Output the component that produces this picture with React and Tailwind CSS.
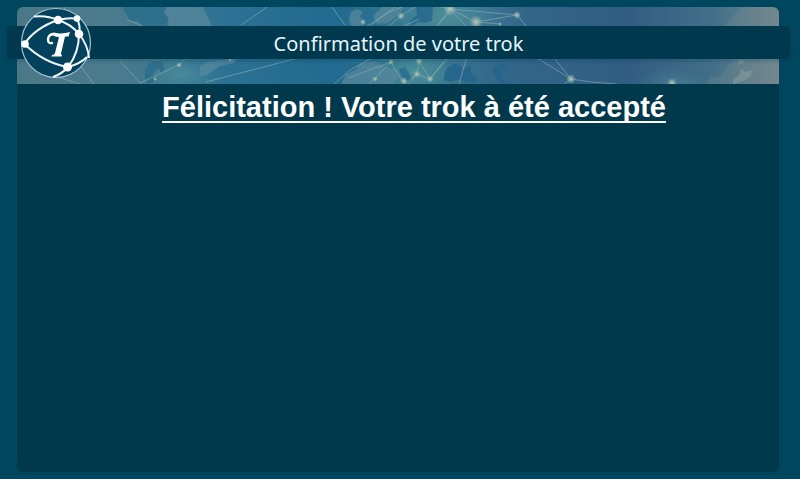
import React from "react";

const nodes = [
  [37, 69, 2], [138, 72, 2], [162, 58, 3], [213, 53, 2], [384, 9, 4], [433, 2, 7],
  [459, 15, 7], [483, 17, 2], [500, 8, 4], [358, 72, 3], [374, 55, 3], [402, 54, 4],
  [387, 74, 4], [400, 67, 4], [413, 72, 4], [554, 72, 5], [346, 15, 3], [655, 76, 5],
];

function WorldMap() {
  return (
    <svg className="block h-full w-full" viewBox="0 0 762 77" preserveAspectRatio="none" aria-hidden="true">
      <defs>
        <linearGradient id="sky" x1="0" x2="1" y1="0" y2="0">
          <stop offset="0" stopColor="#4b7887" />
          <stop offset=".14" stopColor="#4a7b8e" />
          <stop offset=".28" stopColor="#2b7194" />
          <stop offset=".42" stopColor="#226b90" />
          <stop offset=".54" stopColor="#3c7b90" />
          <stop offset=".64" stopColor="#32668b" />
          <stop offset=".8" stopColor="#315d83" />
          <stop offset=".91" stopColor="#416f88" />
          <stop offset="1" stopColor="#6e868f" />
        </linearGradient>
        <radialGradient id="glow">
          <stop offset="0" stopColor="#6fb5ac" stopOpacity=".75" />
          <stop offset="1" stopColor="#4d9b9e" stopOpacity="0" />
        </radialGradient>
        <radialGradient id="spark">
          <stop offset="0" stopColor="#c2c5b4" />
          <stop offset=".45" stopColor="#9cb5ac" stopOpacity=".7" />
          <stop offset="1" stopColor="#6fb5ac" stopOpacity="0" />
        </radialGradient>
      </defs>
      <rect width="762" height="77" fill="url(#sky)" />
      <ellipse cx="165" cy="68" rx="42" ry="20" fill="url(#glow)" opacity=".45" />
      <ellipse cx="436" cy="10" rx="80" ry="32" fill="url(#glow)" opacity=".5" />
      <ellipse cx="395" cy="66" rx="56" ry="28" fill="url(#glow)" opacity=".5" />
      <ellipse cx="655" cy="77" rx="36" ry="16" fill="url(#glow)" opacity=".35" />
      <g fill="#2b6e8c" opacity=".85">
        <path d="M109 0h42l-3 6 4 5-3 8h-24l-4-5-8-1-5-8-3-5z" />
        <path d="M128 61l8-7 9 1 2 6-7 1-4 5 1 8-6 2-3-7zM142 60l6 1-4 6z" />
      </g>
      <g fill="#5a899c" opacity=".7">
        <path d="M149 0h37l9 19h-43l-1-8-4-5zM183 59l7-4 24-3 7-2-4 6-14 3-13 9-7 1z" />
        <path d="M334 5l6-3 6 3-3 4 6 8-5 2h-9l-2-3-1-5zM356 9l9-9h22l-6 8-10 8-11 1z" />
        <path d="M329 67l9-4 6-7 13-2 11 6 10 1 4 8-6 8h-52z" />
      </g>
      <g fill="#26658c">
        <path d="M399 0h17l-1 14-6 2-8-1-6 4-2-5 7-6z" opacity=".8" />
        <path d="M427 68l4-8 6-3 6 1 3 5 7-5 1 8 5 4 1 4-4 2-8-1-6-3-8 3-7-2zM476 61l12-5 1 5-5 5 3 9 7 2h-11l-6-10z" />
        <path d="M382 62l6-2 4 6 3 6-4 4-6-6z" opacity=".7" />
      </g>
      <path d="M724 0h38v77H689l5-8 7 2 6-7 7-9 5-8-13-26z" fill="#8a9894" opacity=".2" />
      <path d="M722 53h5l-1 4h-5zM716 73l6-5 2-6 5 3 7-2-3 7-9 5-8 2z" fill="#839698" opacity=".7" />
      <path d="M110 13l16 6M50 0L24 19M57 50l20 27M103 54l20 22 39-18 9-9M37 69L63 77M189 75l92-24M224 18L250 0M315 0l13 18M317 77l16-14 22-12M350 19l22-14 13-5M331 71l43-16M352 77l22-22 13 22M352 20L378 0M384 9l-12 10M384 9l14-9M402 54l-2 13-13 10M402 54l11 18 14-18M421 18l12-16 26 13 24 2M433 2l67 6M459 15l41-7 9 11M433 2l16 17M420 19l15-17-12-2M402 12l-15 7M391 77l9-10 13 5M413 72l18-21M450 49l-8 28M520 51l34 21 20 3 26 2M537 51l17 21-7 5" fill="none" stroke="#8eafb4" strokeOpacity=".6" strokeWidth="1" />
      {nodes.map(([x, y, r]) => (
        <circle key={`${x}-${y}`} cx={x} cy={y} r={r} fill="url(#spark)" />
      ))}
    </svg>
  );
}

function Logo() {
  return (
    <svg className="block h-full w-full" viewBox="0 0 72 72" role="img" aria-label="Trok">
      <circle cx="36" cy="36" r="34.5" fill="#04415c" stroke="#a3c6d5" strokeWidth="1.2" />
      <g fill="none" stroke="#eef8fc" strokeWidth="2">
        <path d="M14 9.500Q27 8 38 13M38 13Q50 10 57 12M38 13Q15 21 4.500 37Q24 56 48 60Q60 57 67 50M38 13Q51 17 59 27Q68 38 69 51M57 12Q61 19 59 27Q59 46 48 60Q42 67 33 70" />
      </g>
      <g fill="#fff">
        <circle cx="38" cy="13" r="4.300" />
        <circle cx="57" cy="11.500" r="3.300" />
        <circle cx="59" cy="27" r="4.300" />
        <circle cx="5" cy="37" r="3.800" />
        <circle cx="47.500" cy="60" r="4.500" />
      </g>
      <path d="M34 27Q29 27 28 32Q28 37 32 36" fill="none" stroke="#fff" strokeWidth="2.400" strokeLinecap="round" />
      <path d="M34 25.500Q41 27.500 50 25L48.500 29.500Q46 29.500 45 29.500L41 46.500Q41 48 42 48L41.500 49.500H31.500L32 48Q34.500 48 35 46L39 30Q33 29.500 32 27Z" fill="#fff" />
    </svg>
  );
}

export default function App() {
  return (
    <div className="flex min-h-screen flex-col bg-[#00465f] pt-[7px] pr-[21px] pb-[7px] pl-[17px]">
      <main className="flex grow flex-col rounded-md bg-[#00394c]">
        <header className="relative h-[77px]">
          <div className="h-full overflow-hidden rounded-t-md">
            <WorldMap />
          </div>
          <div className="absolute top-[19px] -right-[11px] -left-[10px] flex h-[33px] items-center justify-center rounded-sm bg-[#00384d] pt-[2px] shadow-[0_3px_3px_#003b5033]">
            <h2 className="font-['Noto_Sans',sans-serif] text-[20px] leading-6 text-[#e6f5fa]">Confirmation de votre trok</h2>
          </div>
          <div className="absolute top-0 left-[3px] size-[72px]">
            <Logo />
          </div>
        </header>
        <h1 className="pt-[7px] pl-8 text-center font-['Liberation_Sans',Arial,sans-serif] text-[29px] leading-8 font-bold text-white underline decoration-2 underline-offset-4 [text-decoration-skip-ink:none]">
          Félicitation ! Votre trok à été accepté
        </h1>
      </main>
    </div>
  );
}
